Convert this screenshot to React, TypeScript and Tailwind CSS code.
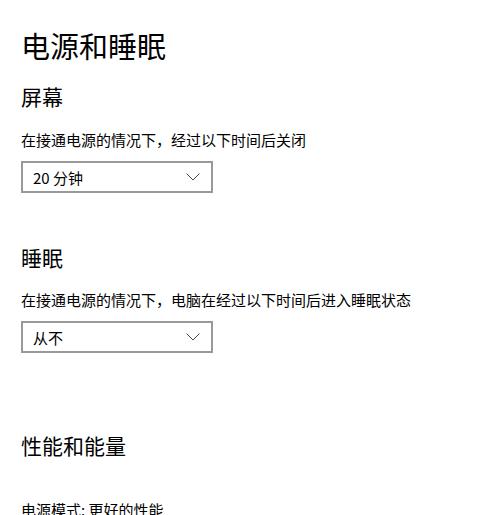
const font = { fontFamily: '"Noto Sans CJK SC", "Noto Sans", sans-serif' };

function Select({ value }: { value: string }) {
  return (
    <div className="mt-[14px] flex h-[32px] w-[192px] items-center justify-between border-2 border-[#999999] bg-white pl-[10px] pr-[10px]">
      <span className="text-[15px] leading-none text-black">{value}</span>
      <svg width="14" height="8" viewBox="0 0 14 8" className="mr-[1px]">
        <polyline points="0.5,0.5 7,7 13.5,0.5" fill="none" stroke="#444" strokeWidth="1" />
      </svg>
    </div>
  );
}

export default function App() {
  return (
    <div className="h-[515px] w-[500px] overflow-hidden bg-white pl-[21px] pt-[31px] text-black" style={font}>
      <h1 className="text-[29px] leading-none font-normal">电源和睡眠</h1>

      {/* 屏幕 */}
      <h2 className="mt-[26px] text-[21px] leading-none">屏幕</h2>
      <p className="mt-[25px] text-[15px] leading-none">在接通电源的情况下，经过以下时间后关闭</p>
      <Select value="20 分钟" />

      {/* 睡眠 */}
      <h2 className="mt-[54px] text-[21px] leading-none">睡眠</h2>
      <p className="mt-[24px] text-[15px] leading-none">在接通电源的情况下，电脑在经过以下时间后进入睡眠状态</p>
      <Select value="从不" />

      {/* 性能和能量 */}
      <h2 className="mt-[82px] text-[21px] leading-none">性能和能量</h2>
      <p className="mt-[46px] text-[15px] leading-none">电源模式: 更好的性能</p>
    </div>
  );
}
